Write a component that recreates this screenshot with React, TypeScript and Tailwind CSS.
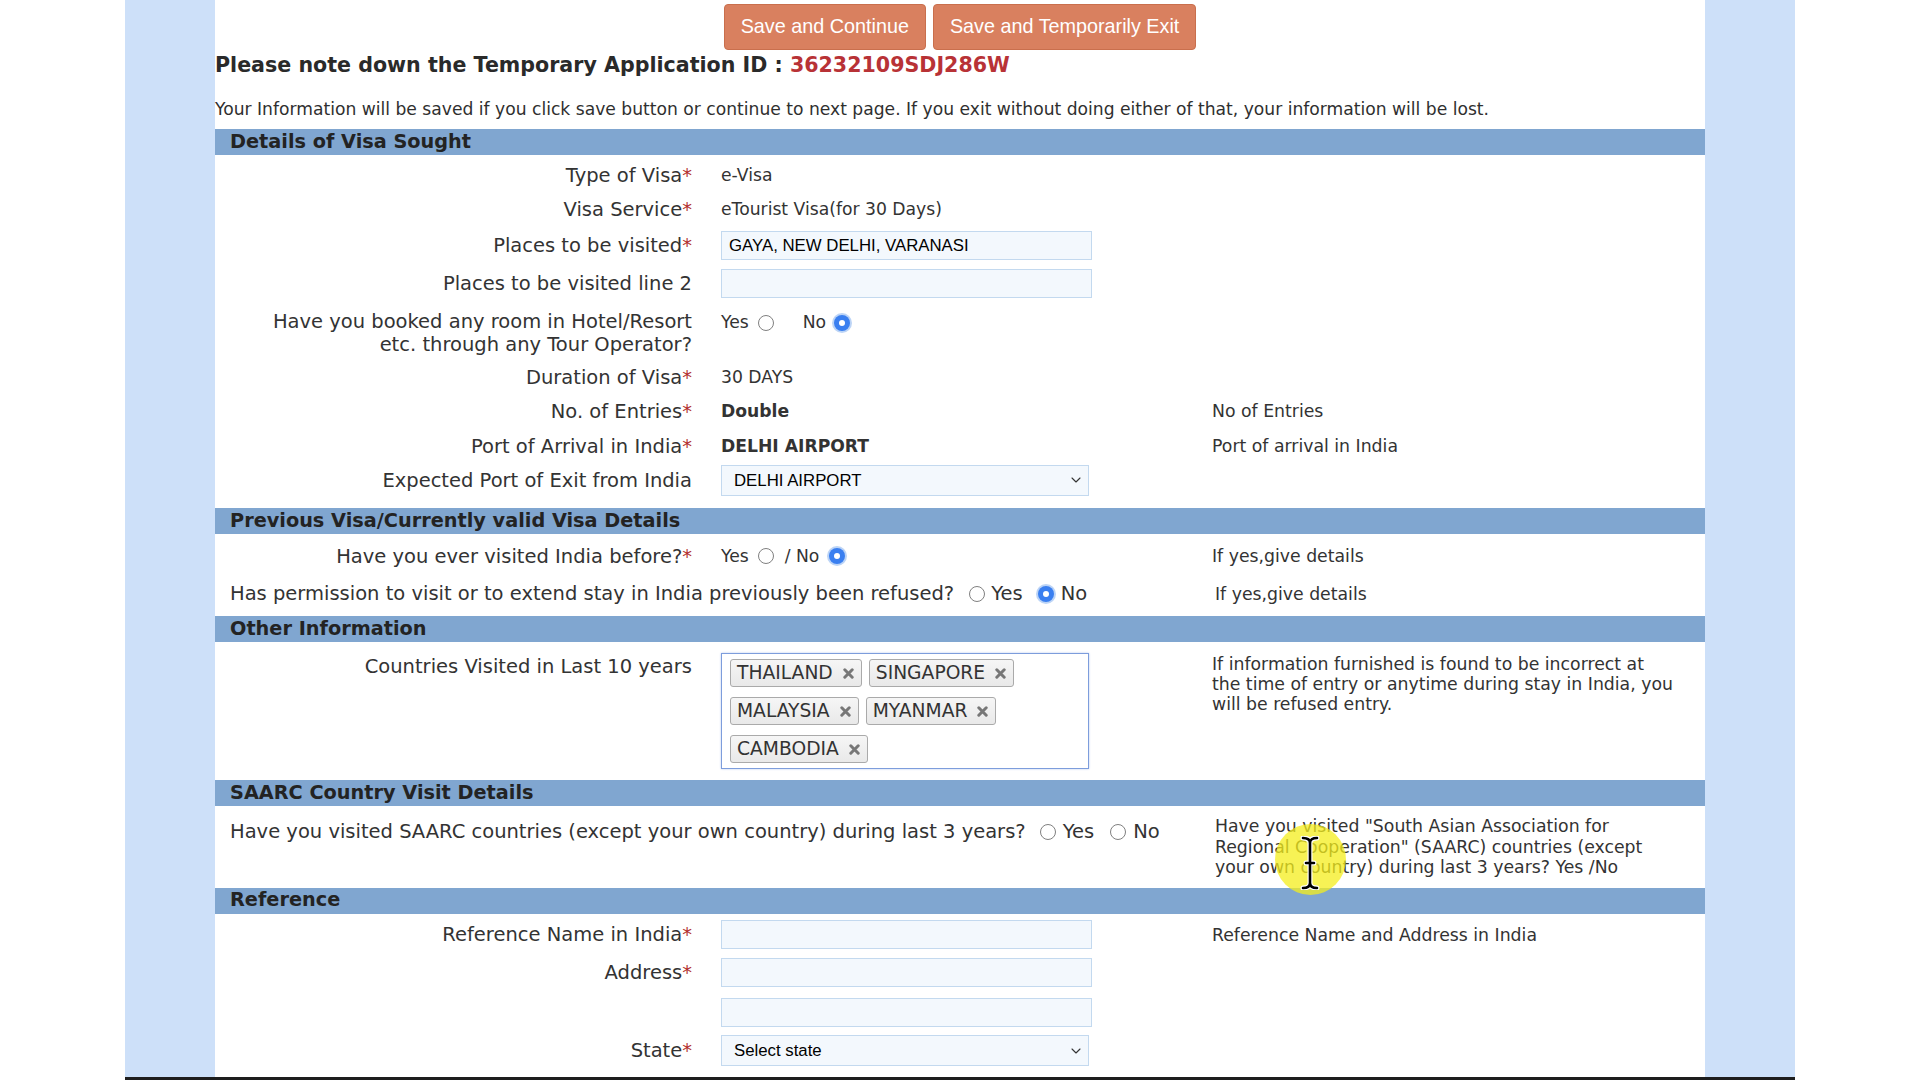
import { ChevronDown } from "lucide-react";
import type { ReactNode } from "react";

const labelCls = "w-[477px] shrink-0 text-right text-[19.5px] leading-[23px] text-[#333]";
const valueCls = "ml-[29px] w-[491px] shrink-0 text-[17.2px] leading-[23px] text-[#333]";
const hintCls = "text-[17.3px] leading-[20px] text-[#333]";
const boxFont = "font-['Liberation_Sans',Arial,sans-serif] text-[16.8px] text-black";

function Req() {
  return <span className="text-[#b3302f]">*</span>;
}

function Radio({ checked, className = "" }: { checked?: boolean; className?: string }) {
  if (checked) {
    return (
      <span
        className={`flex h-[16px] w-[16px] shrink-0 items-center justify-center rounded-full bg-[#3a7ff0] shadow-[0_0_0_2px_#bcd4f6] ${className}`}
      >
        <span className="h-[6px] w-[6px] rounded-full bg-white" />
      </span>
    );
  }
  return <span className={`block h-[16px] w-[16px] shrink-0 rounded-full border border-[#808080] bg-white ${className}`} />;
}

function SectionHeader({ title }: { title: string }) {
  return (
    <div className="flex h-[26px] items-center bg-[#80a6d0] pl-[15px] text-[19.3px] font-bold text-[#232323]">
      {title}
    </div>
  );
}

function Field({
  label,
  required,
  hint,
  h,
  children,
}: {
  label: ReactNode;
  required?: boolean;
  hint?: string;
  h: string;
  children?: ReactNode;
}) {
  return (
    <div className={`flex items-center ${h}`}>
      <div className={labelCls}>
        {label}
        {required && <Req />}
      </div>
      <div className={valueCls}>{children}</div>
      {hint && <div className={hintCls}>{hint}</div>}
    </div>
  );
}

function TextBox({ value = "" }: { value?: string }) {
  return (
    <div className={`flex h-[29px] w-[371px] items-center border border-[#c3d9ef] bg-[#f3f8fd] px-[7px] ${boxFont}`}>
      {value}
    </div>
  );
}

function SelectBox({ value }: { value: string }) {
  return (
    <div
      className={`flex h-[31px] w-[368px] items-center justify-between border border-[#c3d9ef] bg-[#f3f8fd] pl-[12px] pr-[4px] ${boxFont}`}
    >
      <span>{value}</span>
      <ChevronDown size={16} strokeWidth={1.6} className="text-[#333]" />
    </div>
  );
}

function Tag({ name }: { name: string }) {
  return (
    <span className="flex h-[28px] items-center gap-[10px] rounded-[3px] border border-[#aaa] bg-gradient-to-b from-[#f6f6f6] to-[#e9e9e9] pl-[6px] pr-[7px] text-[18.7px] text-[#333]">
      {name}
      <svg width="11" height="11" viewBox="0 0 11 11">
        <path d="M1.8 1.8 L9.2 9.2 M9.2 1.8 L1.8 9.2" stroke="#777" strokeWidth="3" strokeLinecap="round" />
      </svg>
    </span>
  );
}

function YesNo({ yes, no, slash, wide }: { yes?: boolean; no?: boolean; slash?: boolean; wide?: boolean }) {
  return (
    <div className="flex items-center">
      <span>Yes</span>
      <Radio checked={yes} className="ml-[9px]" />
      <span className={wide ? "ml-[29px]" : "ml-[11px]"}>{slash ? "/ No" : "No"}</span>
      <Radio checked={no} className={slash ? "ml-[10px]" : "ml-[8px]"} />
    </div>
  );
}

export default function App() {
  const tagRows = [["THAILAND", "SINGAPORE"], ["MALAYSIA", "MYANMAR"], ["CAMBODIA"]];

  return (
    <div className="h-[1080px] w-full overflow-hidden bg-white font-['DejaVu_Sans',Verdana,sans-serif]">
      <div className="relative mx-auto h-full w-[1670px] bg-[#cde0f9] px-[90px]">
        <div className="h-full bg-white">
          {/* action buttons */}
          <div className="flex justify-center gap-[7px] pt-[4px]">
            <button className="h-[46px] rounded-[4px] border border-[#c96f4d] bg-[#d9805f] px-[16px] font-['Liberation_Sans',Arial,sans-serif] text-[19.8px] text-white">
              Save and Continue
            </button>
            <button className="h-[46px] rounded-[4px] border border-[#c96f4d] bg-[#d9805f] px-[16px] font-['Liberation_Sans',Arial,sans-serif] text-[19.8px] text-white">
              Save and Temporarily Exit
            </button>
          </div>

          <div className="flex h-[30px] items-center text-[20.6px] font-bold text-[#2a2a2a]">
            Please note down the Temporary Application ID :&nbsp;<span className="text-[#b83236]">36232109SDJ286W</span>
          </div>

          <p className="mt-[18px] h-[22px] text-[17.15px] leading-[22px] text-[#2f2f2f]">
            Your Information will be saved if you click save button or continue to next page. If you exit without doing
            either of that, your information will be lost.
          </p>

          <div className="mt-[9px]">
            <SectionHeader title="Details of Visa Sought" />
            <div className="pb-[10px] pt-[3px]">
              <Field label="Type of Visa" required h="h-[34px]">
                e-Visa
              </Field>
              <Field label="Visa Service" required h="h-[34px]">
                eTourist Visa(for 30 Days)
              </Field>
              <Field label="Places to be visited" required h="h-[38px]">
                <TextBox value="GAYA, NEW DELHI, VARANASI" />
              </Field>
              <Field label="Places to be visited line 2" h="h-[38px]">
                <TextBox />
              </Field>
              <div className="flex h-[60px] items-start pt-[8px]">
                <div className={labelCls}>
                  Have you booked any room in Hotel/Resort
                  <br />
                  etc. through any Tour Operator?
                </div>
                <div className={`${valueCls} pt-[1px]`}>
                  <YesNo no wide />
                </div>
              </div>
              <Field label="Duration of Visa" required h="h-[30px]">
                30 DAYS
              </Field>
              <Field label="No. of Entries" required hint="No of Entries" h="h-[38px]">
                <b>Double</b>
              </Field>
              <Field label="Port of Arrival in India" required hint="Port of arrival in India" h="h-[32px]">
                <b>DELHI AIRPORT</b>
              </Field>
              <Field label="Expected Port of Exit from India" h="h-[36px]">
                <SelectBox value="DELHI AIRPORT" />
              </Field>
            </div>

            <SectionHeader title="Previous Visa/Currently valid Visa Details" />
            <div className="pb-[6px]">
              <Field label="Have you ever visited India before?" required hint="If yes,give details" h="h-[44px]">
                <YesNo no slash />
              </Field>
              <div className="flex h-[32px] items-center">
                <div className="flex w-[997px] shrink-0 items-center pl-[15px] text-[19.5px] text-[#333]">
                  <span>Has permission to visit or to extend stay in India previously been refused?</span>
                  <Radio className="ml-[15px]" />
                  <span className="ml-[6px]">Yes</span>
                  <Radio checked className="ml-[15px]" />
                  <span className="ml-[7px]">No</span>
                </div>
                <div className={`${hintCls} pl-[3px]`}>If yes,give details</div>
              </div>
            </div>

            <SectionHeader title="Other Information" />
            <div className="flex items-start pb-[11px] pt-[11px]">
              <div className={`${labelCls} pt-[2px]`}>Countries Visited in Last 10 years</div>
              <div className="ml-[29px] w-[491px] shrink-0">
                <div className="flex h-[116px] w-[368px] flex-col gap-[10px] border border-[#7d9ddc] px-[8px] pt-[5px] shadow-[0_0_2px_#b9c9ee]">
                  {tagRows.map((row) => (
                    <div key={row[0]} className="flex gap-[7px]">
                      {row.map((c) => (
                        <Tag key={c} name={c} />
                      ))}
                    </div>
                  ))}
                </div>
              </div>
              <div className={`${hintCls} pt-[1px]`}>
                If information furnished is found to be incorrect at
                <br />
                the time of entry or anytime during stay in India, you
                <br />
                will be refused entry.
              </div>
            </div>

            <SectionHeader title="SAARC Country Visit Details" />
            <div className="flex items-start pb-[10px] pt-[10px]">
              <div className="flex w-[997px] shrink-0 items-center pl-[15px] pt-[4px] text-[19.5px] leading-[23px] text-[#333]">
                <span>Have you visited SAARC countries (except your own country) during last 3 years?</span>
                <Radio className="ml-[14px]" />
                <span className="ml-[7px]">Yes</span>
                <Radio className="ml-[16px]" />
                <span className="ml-[7px]">No</span>
              </div>
              <div className="pl-[3px] text-[17.3px] leading-[20.5px] text-[#333]">
                Have you visited "South Asian Association for
                <br />
                Regional Cooperation" (SAARC) countries (except
                <br />
                your own country) during last 3 years? Yes /No
              </div>
            </div>

            <SectionHeader title="Reference" />
            <div className="pt-[3px]">
              <Field label="Reference Name in India" required hint="Reference Name and Address in India" h="h-[36px]">
                <TextBox />
              </Field>
              <Field label="Address" required h="h-[40px]">
                <TextBox />
              </Field>
              <Field label="" h="h-[39px]">
                <TextBox />
              </Field>
              <Field label="State" required h="h-[38px]">
                <SelectBox value="Select state" />
              </Field>
              <div className="flex pt-[8px]">
                <div className="ml-[506px]">
                  <SelectBox value="" />
                </div>
              </div>
            </div>
          </div>
        </div>

        {/* pointer highlight */}
        <div className="pointer-events-none absolute left-[1150px] top-[824px] h-[71px] w-[71px] rounded-full bg-[#f4ee1c]/75" />
        <svg
          className="pointer-events-none absolute left-[1175px] top-[836px]"
          width="20"
          height="54"
          viewBox="0 0 20 54"
        >
          <path
            d="M3 2 Q10 2 10 7 Q10 2 17 2 M10 7 L10 47 M3 52 Q10 52 10 47 Q10 52 17 52 M6 27 L14 27"
            fill="none"
            stroke="#fff"
            strokeWidth="5"
            strokeLinecap="round"
          />
          <path
            d="M3 2 Q10 2 10 7 Q10 2 17 2 M10 7 L10 47 M3 52 Q10 52 10 47 Q10 52 17 52 M6 27 L14 27"
            fill="none"
            stroke="#000"
            strokeWidth="2.6"
            strokeLinecap="round"
          />
        </svg>

        <div className="absolute bottom-0 left-0 h-[3px] w-full bg-[#1e1e1e]" />
      </div>
    </div>
  );
}
